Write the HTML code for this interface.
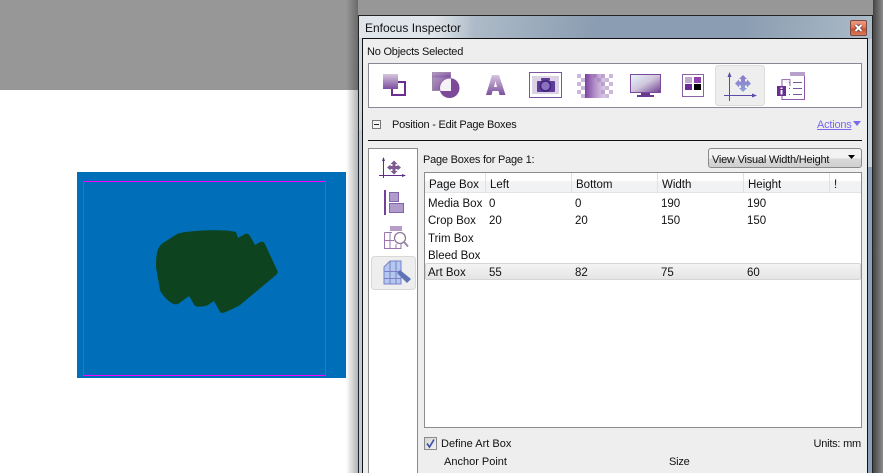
<!DOCTYPE html>
<html><head><meta charset="utf-8"><style>
html,body{margin:0;padding:0;background:#fff}
#p{position:relative;width:883px;height:473px;overflow:hidden;background:#fff;font-family:"Liberation Sans",sans-serif;font-size:11.5px;color:#111}
#p div,#p svg{position:absolute}
.t{white-space:nowrap;line-height:14px;height:14px}
.n{font-size:11px;letter-spacing:-.22px}
</style></head><body><div id="p">
<div style="left:0;top:0;width:883px;height:90px;background:#979797"></div>
<div style="left:77px;top:172px;width:269px;height:206px;background:#006eb8"></div>
<div style="left:83px;top:181px;width:241px;height:193px;border:1px solid #f0f"></div>
<svg style="left:0;top:0" width="358" height="473"><path d="M177 234 C188 230 225 229 236 232 L238 238 L245 234 C247 233 249 234 250 236 L255 245 L260 242 C262 241 264 242 265 244 L277 270 C278 272 278 273 276 275 L240 305 C235 308 226 312 223 313 C221 313 220 312 219 310 L214 301 L208 305 C204 307 198 307 195 306 L189 296 L178 304 C175 305 173 304 170 302 C165 298 161 293 160 290 L156 267 C156 262 156 258 157 253 C158 248 160 245 163 243 Z" fill="#0e4320"/></svg>
<div style="left:346px;top:0;width:12px;height:473px;background:linear-gradient(90deg,rgba(0,0,0,0),rgba(0,0,0,.3))"></div>
<div style="left:873px;top:0;width:10px;height:473px;background:linear-gradient(90deg,#444,#8b8b8b)"></div>
<div style="left:358px;top:15px;width:515px;height:458px;background:linear-gradient(100deg,#d5dde3 0,#c4ced6 6%,#8b9db2 40%,#8b9db2 65%,#b0bfca 90%,#a9b8c4 100%);border:1px solid #222;border-bottom:0;box-sizing:border-box"></div>
<div style="left:359px;top:16px;width:115px;height:22px;background:linear-gradient(90deg,#dfe5ea 65%,rgba(223,229,234,0))"></div>
<div style="left:359px;top:130px;width:3px;height:343px;background:#b8cde0"></div>
<div class="t" style="left:365px;top:21px;color:#111;font-size:12px">Enfocus Inspector</div>
<div style="left:850px;top:20px;width:17px;height:16px;border:1px solid #7b4a42;box-sizing:border-box;border-radius:2px;background:linear-gradient(#ec9a80 0,#e0714f 50%,#c94f2e 55%,#d87a5a 100%)"></div>
<svg style="left:850px;top:20px" width="17" height="16"><path d="M5.500 5 L11.500 11 M11.500 5 L5.500 11" stroke="#5a3a3a" stroke-width="3.500"/><path d="M5.500 5 L11.500 11 M11.500 5 L5.500 11" stroke="#fff" stroke-width="2"/></svg>
<div style="left:362px;top:38px;width:506px;height:435px;background:#eeeeee;border:1px solid #111;border-bottom:0;box-sizing:border-box"></div>
<div style="left:868px;top:39px;width:4px;height:434px;background:#c5d0d8"></div>
<div style="left:868px;top:167px;width:4px;height:306px;background:#8ba3b8"></div>
<div class="t n" style="left:367px;top:45px">No Objects Selected</div>

<div style="left:368px;top:63px;width:494px;height:45px;background:#fff;border:1px solid #8b8793;box-sizing:border-box"></div>
<!-- toolbar icons -->
<svg style="left:368px;top:63px" width="494" height="45" viewBox="368 63 494 45">
<defs>
<linearGradient id="g1" x1="0" y1="0" x2="0" y2="1"><stop offset="0" stop-color="#d6c6de"/><stop offset="1" stop-color="#7d4f9e"/></linearGradient>
<linearGradient id="g2" x1="0" y1="0" x2="1" y2="1"><stop offset="0" stop-color="#b8a0c8"/><stop offset="1" stop-color="#7a4a98"/></linearGradient>
<linearGradient id="g3" x1="0" y1="0" x2="1" y2="1"><stop offset="0" stop-color="#e8f6fd"/><stop offset=".5" stop-color="#cfc6dc"/><stop offset="1" stop-color="#6d3f8e"/></linearGradient>
<linearGradient id="g4" x1="0" y1="0" x2="1" y2="0"><stop offset="0" stop-color="#7a3f9e"/><stop offset="1" stop-color="#b698cc" stop-opacity=".5"/></linearGradient>
<linearGradient id="g5" x1="0" y1="0" x2="0" y2="1"><stop offset="0" stop-color="#8c77c8"/><stop offset="1" stop-color="#8ca2d8"/></linearGradient>
<clipPath id="sq"><rect x="432" y="72" width="19" height="19"/></clipPath>
</defs>
<rect x="392" y="82" width="13" height="13" fill="#fff" stroke="#6b2d90" stroke-width="2"/>
<rect x="383" y="74" width="15" height="15" fill="url(#g1)"/>
<rect x="432.500" y="72.500" width="18" height="18" fill="url(#g2)" stroke="#9b89a8"/>
<circle cx="449.500" cy="88" r="10" fill="#7c4a98"/>
<rect x="432.500" y="72.500" width="18" height="5" fill="url(#g2)"/>
<circle cx="449.500" cy="88" r="9.500" fill="#f5f2f7" clip-path="url(#sq)"/>
<path d="M486 95 L492 75 H499 L505.500 95 H499.500 L498.500 91 H492.500 L491.500 95Z M494 87 H497 L495.500 81Z" fill="url(#g1)" fill-rule="evenodd"/>
<rect x="529.500" y="72.500" width="32" height="25" fill="#fff" stroke="#7f55a0"/>
<rect x="532" y="76" width="27" height="18" fill="#dcd2e6"/>
<rect x="537" y="81" width="18" height="11" rx="1" fill="#5f3c9a"/>
<rect x="541" y="78" width="9" height="3" rx="1" fill="#5f3c9a"/>
<circle cx="545.500" cy="86" r="5" fill="#8a72c0" stroke="#3f2478" stroke-width="1.500"/>
<g fill="#cdb6dc"><rect x="577" y="74" width="4" height="4"/><rect x="585" y="74" width="4" height="4"/><rect x="593" y="74" width="4" height="4"/><rect x="601" y="74" width="4" height="4"/><rect x="609" y="74" width="4" height="4"/>
<rect x="581" y="78" width="4" height="4"/><rect x="605" y="78" width="4" height="4"/><rect x="597" y="78" width="4" height="4"/>
<rect x="577" y="82" width="4" height="4"/><rect x="601" y="82" width="4" height="4"/><rect x="609" y="82" width="4" height="4"/>
<rect x="581" y="86" width="4" height="4"/><rect x="605" y="86" width="4" height="4"/>
<rect x="577" y="90" width="4" height="4"/><rect x="601" y="90" width="4" height="4"/><rect x="609" y="90" width="4" height="4"/>
<rect x="581" y="94" width="4" height="4"/><rect x="605" y="94" width="4" height="4"/></g>
<rect x="585" y="74" width="20" height="24" fill="url(#g4)"/>
<rect x="630.500" y="74.500" width="30" height="18" fill="url(#g3)" stroke="#7c4a9c"/>
<rect x="641" y="93" width="9" height="3" fill="#6b3a90"/><rect x="637" y="95" width="17" height="2" fill="#6b3a90"/>
<rect x="682.500" y="74.500" width="21" height="22" fill="#fff" stroke="#8763a5"/>
<rect x="685" y="77" width="7" height="6" fill="#bcaecb"/><rect x="694" y="77" width="7" height="6" fill="#8f3fb0"/>
<rect x="685" y="84" width="7" height="6" fill="#6e2a98"/><rect x="694" y="84" width="7" height="6" fill="#000"/>
<rect x="715.500" y="65.500" width="49" height="40" rx="3" fill="#eeeeee" stroke="#dcdcdc"/>
<path d="M729.500 73 V101 M724 95.500 H756" stroke="#5b49ac" fill="none"/>
<path d="M729.500 72 L727.500 77 H731.500Z M757 95.500 L752 93.500 V97.500Z" fill="#5b49ac"/>
<path d="M743 75 L747 79 H745 V81.500 H747 V79.500 L751 83.500 L747 87.500 V85.500 H745 V88 H747 L743 92 L739 88 H741 V85.500 H739 V87.500 L735 83.500 L739 79.500 V81.500 H741 V79 H739Z" fill="url(#g5)"/>
<path d="M790 72.500 H804.500 V99.500 H782 V80" fill="#fff" stroke="#8a5aa8"/>
<rect x="790" y="72" width="15" height="4" fill="#b8a0cc"/>
<path d="M781.500 79.500 H790 V86" fill="#f6f2f8" stroke="#9a78b4"/>
<rect x="777" y="86" width="9" height="10" fill="#6a2f8e"/>
<rect x="780.500" y="87.500" width="2" height="1.500" fill="#fff"/><rect x="780.500" y="90" width="2" height="4.500" fill="#fff"/>
<path d="M793 82.500 H802 M793 88.500 H802 M793 94.500 H802" stroke="#7b57a0"/>
<path d="M789 82.500 H790 M789 88.500 H790 M789 94.500 H790" stroke="#7b57a0"/>
</svg>
<div style="left:372px;top:120px;width:9px;height:9px;border:1px solid #777;box-sizing:border-box;background:#f4f4f4"></div>
<div style="left:374px;top:124px;width:5px;height:1px;background:#222"></div>
<div class="t n" style="left:392px;top:118px">Position - Edit Page Boxes</div>
<div class="t n" style="left:817px;top:118px;color:#7a68f0;text-decoration:underline">Actions</div>
<svg style="left:853px;top:121px" width="9" height="6"><path d="M0 0H8L4 5Z" fill="#7a68f0"/></svg>
<div style="left:368px;top:140px;width:494px;height:1px;background:#111"></div>

<div style="left:368px;top:148px;width:50px;height:325px;background:#fff;border:1px solid #8b8b8b;border-bottom:0;box-sizing:border-box"></div>
<svg style="left:368px;top:148px" width="50" height="145" viewBox="368 148 50 145">
<path d="M383.500 158 V178 M379 175.500 H405" stroke="#5f2d88" fill="none"/>
<path d="M383.500 157 L382 161 H385Z M406 175.500 L402 174 V177Z" fill="#5f2d88"/>
<path d="M394 160.500 L397.500 164 H395.500 V166 H397.500 V164.500 L401 167.500 L397.500 170.500 V169 H395.500 V171 H397.500 L394 174.500 L390.500 171 H392.500 V169 H390.500 V170.500 L387 167.500 L390.500 164.500 V166 H392.500 V164 H390.500Z" fill="#7d5a92"/>
<rect x="384" y="190" width="2" height="25" fill="#74409c"/>
<rect x="389.500" y="192.500" width="9" height="9" fill="#b09ccc" stroke="#8463a8"/>
<rect x="389.500" y="203.500" width="14" height="9" fill="#b09ccc" stroke="#8463a8"/>
<path d="M384.500 232.500 H392 M384.500 232.500 V248.500 H401 V244 M384.500 240.500 H394 M390 232.500 V248.500 M396 244 V248.500" fill="none" stroke="#9a76ae"/>
<rect x="390" y="226" width="12" height="5" fill="#b89cc8"/>
<circle cx="400" cy="238" r="5.500" fill="#fff" stroke="#8c7a98" stroke-width="1.300"/>
<path d="M404 242 L408 246.500" stroke="#9a86a6" stroke-width="2"/>
<rect x="371.500" y="256.500" width="44" height="33" rx="3" fill="#eeeeee" stroke="#d8d8d8"/>
<path d="M384 267 L390 261 H401 V284 H384Z" fill="#b4c8ee" stroke="#7a80c8"/>
<path d="M384 271.500 H401 M384 278.500 H401 M390 261 V284 M396 261 V284" stroke="#7a80c8" fill="none"/>
<path d="M397 273 L400 270 L411 279 L407 283Z" fill="#5f73b8"/>
</svg>

<div class="t n" style="left:423px;top:153px">Page Boxes for Page 1:</div>
<div style="left:708px;top:148px;width:154px;height:20px;box-sizing:border-box;border:1px solid #8a8a8a;border-radius:3px;background:linear-gradient(#f2f2f2 50%,#d9d9d9 55%,#cfcfcf)"></div>
<div class="t n" style="left:712px;top:153px;color:#111">View Visual Width/Height</div>
<svg style="left:848px;top:155px" width="9" height="6"><path d="M0 0H7L3.500 4Z" fill="#000"/></svg>

<div style="left:424px;top:172px;width:438px;height:256px;background:#fff;border:1px solid #8c8c8c;box-sizing:border-box"></div>
<div style="left:425px;top:173px;width:436px;height:20px;background:linear-gradient(#fff 40%,#f1f2f4 45%,#f1f2f4);border-bottom:1px solid #e2e3e6;box-sizing:border-box"></div>
<div style="left:485px;top:173px;width:1px;height:20px;background:#e0e1e4"></div>
<div style="left:571px;top:173px;width:1px;height:20px;background:#e0e1e4"></div>
<div style="left:657px;top:173px;width:1px;height:20px;background:#e0e1e4"></div>
<div style="left:743px;top:173px;width:1px;height:20px;background:#e0e1e4"></div>
<div style="left:829px;top:173px;width:1px;height:20px;background:#e0e1e4"></div>
<div style="left:425px;top:263px;width:436px;height:17px;box-sizing:border-box;border:1px solid #d5d5d5;border-radius:2px;background:linear-gradient(#f4f4f4,#e5e5e5)"></div>
<div class="t" style="left:429px;top:178px">Page Box</div><div class="t" style="left:490px;top:178px">Left</div><div class="t" style="left:576px;top:178px">Bottom</div><div class="t" style="left:662px;top:178px">Width</div><div class="t" style="left:748px;top:178px">Height</div><div class="t" style="left:834px;top:178px">!</div>
<div class="t" style="left:428px;top:197px">Media Box</div><div class="t" style="left:489px;top:197px">0</div><div class="t" style="left:575px;top:197px">0</div><div class="t" style="left:661px;top:197px">190</div><div class="t" style="left:747px;top:197px">190</div>
<div class="t" style="left:428px;top:214px">Crop Box</div><div class="t" style="left:489px;top:214px">20</div><div class="t" style="left:575px;top:214px">20</div><div class="t" style="left:661px;top:214px">150</div><div class="t" style="left:747px;top:214px">150</div>
<div class="t" style="left:428px;top:232px">Trim Box</div>
<div class="t" style="left:428px;top:249px">Bleed Box</div>
<div class="t" style="left:428px;top:266px">Art Box</div><div class="t" style="left:489px;top:266px">55</div><div class="t" style="left:575px;top:266px">82</div><div class="t" style="left:661px;top:266px">75</div><div class="t" style="left:747px;top:266px">60</div>

<div style="left:424px;top:437px;width:13px;height:13px;box-sizing:border-box;border:1px solid #8a8a8a;background:linear-gradient(135deg,#d4d4d4,#f2f2f2)"></div>
<svg style="left:424px;top:437px" width="13" height="13"><path d="M3 6.500 L5.500 10 L10 2.500" fill="none" stroke="#3f4fa8" stroke-width="1.700"/></svg>
<div class="t" style="left:441px;top:437px;font-size:11px">Define Art Box</div>
<div class="t n" style="right:22px;top:437px">Units: mm</div>
<div class="t" style="left:444px;top:455px;font-size:11px">Anchor Point</div>
<div class="t n" style="left:669px;top:455px">Size</div>
</div></body></html>
